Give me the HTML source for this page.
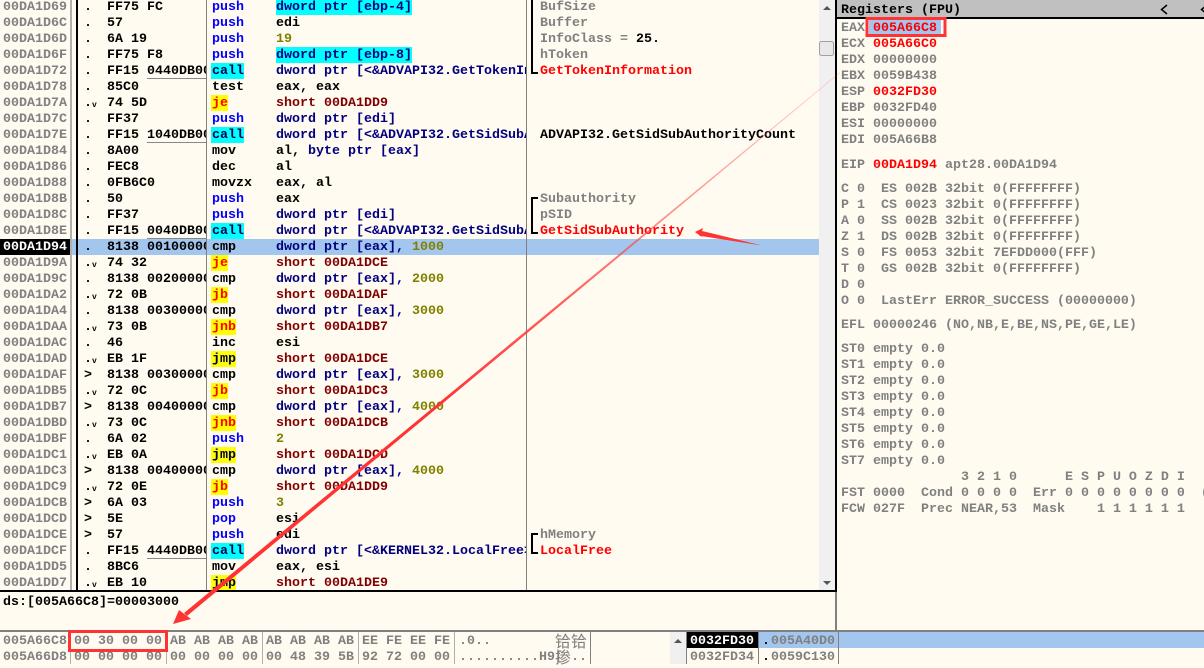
<!DOCTYPE html>
<html><head><meta charset="utf-8"><style>
html,body{margin:0;padding:0}
body{width:1204px;height:664px;overflow:hidden;position:relative;background:#fffbf0;font:bold 13.33px/19px "Liberation Mono","Noto Sans CJK SC",monospace;color:#000}
.abs,.reg,.mem,.r span{white-space:pre}
.abs{position:absolute}
#dis{position:absolute;left:0;top:-1px;width:819px;height:592px;overflow:hidden}
.r{position:relative;height:16px}
.r span,.r i{position:absolute;top:0;height:16px;line-height:17px;font-weight:bold;font-style:normal;text-decoration:none}
.r span span{position:static;height:auto}
.r span span.b{display:inline-block;height:16px;background:#0ff;vertical-align:top}
.a{left:3px;color:#808080}
.d{left:84px}
.r .v{left:92px;font-size:8px;line-height:16px;top:3px}
.h{left:107px;width:99px;overflow:hidden}
.m{left:212px}
.o{left:276px;width:250px;overflow:hidden;color:#000080}
.c{left:540px}
.p{color:#00f}
.cy{background:#0ff;left:211px;width:32px;padding-left:1px;color:#000050}
.ye{background:#ff0;left:211px;padding:0 0 0 1px;color:#f00}
.jm{background:#ff0;left:211px;padding:0 0 0 1px;color:#000040}
.k{color:#000}.n{color:#808000}.s{color:#800000}.g{color:#808080}.rd{color:#f00}
.hl{background:#a3c6ef}
.r .ul{left:147px;width:59px;height:1px;top:15px;background:#888}
.t{position:absolute;background:#000}
.reg{position:absolute;left:841px;color:#808080}
.mem{position:absolute;color:#808080}
.x{position:absolute;top:632px;height:32px;width:1px;background:#b0b0b0}
</style></head><body>
<div class="abs hl" style="left:72px;top:239px;width:747px;height:16px"></div>
<div class="abs" style="left:0;top:239px;width:70px;height:16px;background:#000"></div>
<div id="dis">
<div class="r"><span class="a">00DA1D69</span><span class="d">.</span><span class="h">FF75 FC</span><span class="m p">push</span><span class="o"><span class="b">dword ptr [ebp-4]</span></span><span class="c g">BufSize</span></div>
<div class="r"><span class="a">00DA1D6C</span><span class="d">.</span><span class="h">57</span><span class="m p">push</span><span class="o k">edi</span><span class="c g">Buffer</span></div>
<div class="r"><span class="a">00DA1D6D</span><span class="d">.</span><span class="h">6A 19</span><span class="m p">push</span><span class="o n">19</span><span class="c g">InfoClass = <span style="color:#000">25.</span></span></div>
<div class="r"><span class="a">00DA1D6F</span><span class="d">.</span><span class="h">FF75 F8</span><span class="m p">push</span><span class="o"><span class="b">dword ptr [ebp-8]</span></span><span class="c g">hToken</span></div>
<div class="r"><span class="a">00DA1D72</span><span class="d">.</span><span class="h">FF15 0440DB00</span><i class="ul"></i><span class="cy">call</span><span class="o">dword ptr [&lt;&amp;ADVAPI32.GetTokenInformation&gt;]</span><span class="c rd">GetTokenInformation</span></div>
<div class="r"><span class="a">00DA1D78</span><span class="d">.</span><span class="h">85C0</span><span class="m">test</span><span class="o k">eax, eax</span></div>
<div class="r"><span class="a">00DA1D7A</span><span class="d">.</span><span class="v">v</span><span class="h">74 5D</span><span class="ye">je</span><span class="o s">short 00DA1DD9</span></div>
<div class="r"><span class="a">00DA1D7C</span><span class="d">.</span><span class="h">FF37</span><span class="m p">push</span><span class="o">dword ptr [edi]</span></div>
<div class="r"><span class="a">00DA1D7E</span><span class="d">.</span><span class="h">FF15 1040DB00</span><i class="ul"></i><span class="cy">call</span><span class="o">dword ptr [&lt;&amp;ADVAPI32.GetSidSubAuthorityCount&gt;]</span><span class="c">ADVAPI32.GetSidSubAuthorityCount</span></div>
<div class="r"><span class="a">00DA1D84</span><span class="d">.</span><span class="h">8A00</span><span class="m">mov</span><span class="o"><span style="color:#000">al, </span>byte ptr [eax]</span></div>
<div class="r"><span class="a">00DA1D86</span><span class="d">.</span><span class="h">FEC8</span><span class="m">dec</span><span class="o k">al</span></div>
<div class="r"><span class="a">00DA1D88</span><span class="d">.</span><span class="h">0FB6C0</span><span class="m">movzx</span><span class="o k">eax, al</span></div>
<div class="r"><span class="a">00DA1D8B</span><span class="d">.</span><span class="h">50</span><span class="m p">push</span><span class="o k">eax</span><span class="c g">Subauthority</span></div>
<div class="r"><span class="a">00DA1D8C</span><span class="d">.</span><span class="h">FF37</span><span class="m p">push</span><span class="o">dword ptr [edi]</span><span class="c g">pSID</span></div>
<div class="r"><span class="a">00DA1D8E</span><span class="d">.</span><span class="h">FF15 0040DB00</span><i class="ul"></i><span class="cy">call</span><span class="o">dword ptr [&lt;&amp;ADVAPI32.GetSidSubAuthority&gt;]</span><span class="c rd">GetSidSubAuthority</span></div>
<div class="r"><span class="a" style="color:#fff">00DA1D94</span><span class="d">.</span><span class="h">8138 00100000</span><span class="m">cmp</span><span class="o">dword ptr [eax], <span class="n">1000</span></span></div>
<div class="r"><span class="a">00DA1D9A</span><span class="d">.</span><span class="v">v</span><span class="h">74 32</span><span class="ye">je</span><span class="o s">short 00DA1DCE</span></div>
<div class="r"><span class="a">00DA1D9C</span><span class="d">.</span><span class="h">8138 00200000</span><span class="m">cmp</span><span class="o">dword ptr [eax], <span class="n">2000</span></span></div>
<div class="r"><span class="a">00DA1DA2</span><span class="d">.</span><span class="v">v</span><span class="h">72 0B</span><span class="ye">jb</span><span class="o s">short 00DA1DAF</span></div>
<div class="r"><span class="a">00DA1DA4</span><span class="d">.</span><span class="h">8138 00300000</span><span class="m">cmp</span><span class="o">dword ptr [eax], <span class="n">3000</span></span></div>
<div class="r"><span class="a">00DA1DAA</span><span class="d">.</span><span class="v">v</span><span class="h">73 0B</span><span class="ye">jnb</span><span class="o s">short 00DA1DB7</span></div>
<div class="r"><span class="a">00DA1DAC</span><span class="d">.</span><span class="h">46</span><span class="m">inc</span><span class="o k">esi</span></div>
<div class="r"><span class="a">00DA1DAD</span><span class="d">.</span><span class="v">v</span><span class="h">EB 1F</span><span class="jm">jmp</span><span class="o s">short 00DA1DCE</span></div>
<div class="r"><span class="a">00DA1DAF</span><span class="d">&gt;</span><span class="h">8138 00300000</span><span class="m">cmp</span><span class="o">dword ptr [eax], <span class="n">3000</span></span></div>
<div class="r"><span class="a">00DA1DB5</span><span class="d">.</span><span class="v">v</span><span class="h">72 0C</span><span class="ye">jb</span><span class="o s">short 00DA1DC3</span></div>
<div class="r"><span class="a">00DA1DB7</span><span class="d">&gt;</span><span class="h">8138 00400000</span><span class="m">cmp</span><span class="o">dword ptr [eax], <span class="n">4000</span></span></div>
<div class="r"><span class="a">00DA1DBD</span><span class="d">.</span><span class="v">v</span><span class="h">73 0C</span><span class="ye">jnb</span><span class="o s">short 00DA1DCB</span></div>
<div class="r"><span class="a">00DA1DBF</span><span class="d">.</span><span class="h">6A 02</span><span class="m p">push</span><span class="o n">2</span></div>
<div class="r"><span class="a">00DA1DC1</span><span class="d">.</span><span class="v">v</span><span class="h">EB 0A</span><span class="jm">jmp</span><span class="o s">short 00DA1DCD</span></div>
<div class="r"><span class="a">00DA1DC3</span><span class="d">&gt;</span><span class="h">8138 00400000</span><span class="m">cmp</span><span class="o">dword ptr [eax], <span class="n">4000</span></span></div>
<div class="r"><span class="a">00DA1DC9</span><span class="d">.</span><span class="v">v</span><span class="h">72 0E</span><span class="ye">jb</span><span class="o s">short 00DA1DD9</span></div>
<div class="r"><span class="a">00DA1DCB</span><span class="d">&gt;</span><span class="h">6A 03</span><span class="m p">push</span><span class="o n">3</span></div>
<div class="r"><span class="a">00DA1DCD</span><span class="d">&gt;</span><span class="h">5E</span><span class="m p">pop</span><span class="o k">esi</span></div>
<div class="r"><span class="a">00DA1DCE</span><span class="d">&gt;</span><span class="h">57</span><span class="m p">push</span><span class="o k">edi</span><span class="c g">hMemory</span></div>
<div class="r"><span class="a">00DA1DCF</span><span class="d">.</span><span class="h">FF15 4440DB00</span><i class="ul"></i><span class="cy">call</span><span class="o">dword ptr [&lt;&amp;KERNEL32.LocalFree&gt;]</span><span class="c rd">LocalFree</span></div>
<div class="r"><span class="a">00DA1DD5</span><span class="d">.</span><span class="h">8BC6</span><span class="m">mov</span><span class="o k">eax, esi</span></div>
<div class="r"><span class="a">00DA1DD7</span><span class="d">.</span><span class="v">v</span><span class="h">EB 10</span><span class="jm">jmp</span><span class="o s">short 00DA1DE9</span></div>
</div>

<!-- column lines -->
<div class="abs" style="left:70px;top:0;width:2px;height:590px;background:#b0b0b0"></div>
<div class="t" style="left:76px;top:0;width:2px;height:590px"></div>
<div class="abs" style="left:206px;top:0;width:1px;height:590px;background:#808080"></div>
<div class="abs" style="left:526px;top:0;width:1px;height:590px;background:#808080"></div>
<!-- brackets -->
<div class="t" style="left:531px;top:0;width:2px;height:74px"></div><div class="t" style="left:531px;top:72px;width:7px;height:2px"></div>
<div class="t" style="left:531px;top:197px;width:2px;height:37px"></div><div class="t" style="left:531px;top:197px;width:7px;height:2px"></div><div class="t" style="left:531px;top:232px;width:7px;height:2px"></div>
<div class="t" style="left:531px;top:533px;width:2px;height:21px"></div><div class="t" style="left:531px;top:533px;width:7px;height:2px"></div><div class="t" style="left:531px;top:552px;width:7px;height:2px"></div>
<!-- scrollbar -->
<div class="abs" style="left:819px;top:0;width:16px;height:590px;background:#f0f0f0"></div>
<svg class="abs" style="left:819px;top:0" width="16" height="590"><path d="M4 10L8 6L12 10Z" fill="#555"/><path d="M4 581L8 585L12 581Z" fill="#555"/><rect x="0.5" y="41.5" width="14" height="14" rx="2" fill="#e8e8e8" stroke="#a0a0a0"/></svg>
<!-- panel borders -->
<div class="t" style="left:0;top:590px;width:836px;height:2px"></div>
<div class="t" style="left:835px;top:0;width:2px;height:592px"></div>
<div class="abs" style="left:835px;top:592px;width:2px;height:39px;background:#808080"></div>
<div class="abs" style="left:0;top:630px;width:1204px;height:2px;background:#808080"></div>
<div class="abs" style="left:3px;top:593px">ds:[005A66C8]=00003000</div>

<!-- registers -->
<div class="abs" style="left:837px;top:0;width:367px;height:18px;background:#c0c0c0"></div>
<div class="t" style="left:837px;top:17px;width:367px;height:2px"></div>
<div class="abs" style="left:841px;top:1px">Registers (FPU)</div>
<svg class="abs" style="left:1155px;top:0" width="49" height="18"><path d="M12 5L6.5 9.5L12 14M52 5L46.5 9.5L52 14" fill="none" stroke="#000" stroke-width="1.5"/></svg>
<div class="abs hl" style="left:869px;top:20px;width:72px;height:15px"></div>
<div class="reg" style="top:19px">EAX <span class="rd">005A66C8</span></div>
<div class="reg" style="top:35px">ECX <span class="rd">005A66C0</span></div>
<div class="reg" style="top:51px">EDX 00000000</div>
<div class="reg" style="top:67px">EBX 0059B438</div>
<div class="reg" style="top:83px">ESP <span class="rd">0032FD30</span></div>
<div class="reg" style="top:99px">EBP 0032FD40</div>
<div class="reg" style="top:115px">ESI 00000000</div>
<div class="reg" style="top:131px">EDI 005A66B8</div>
<div class="reg" style="top:156px">EIP <span class="rd">00DA1D94</span> apt28.00DA1D94</div>
<div class="reg" style="top:180px">C 0  ES 002B 32bit 0(FFFFFFFF)</div>
<div class="reg" style="top:196px">P 1  CS 0023 32bit 0(FFFFFFFF)</div>
<div class="reg" style="top:212px">A 0  SS 002B 32bit 0(FFFFFFFF)</div>
<div class="reg" style="top:228px">Z 1  DS 002B 32bit 0(FFFFFFFF)</div>
<div class="reg" style="top:244px">S 0  FS 0053 32bit 7EFDD000(FFF)</div>
<div class="reg" style="top:260px">T 0  GS 002B 32bit 0(FFFFFFFF)</div>
<div class="reg" style="top:276px">D 0</div>
<div class="reg" style="top:292px">O 0  LastErr ERROR_SUCCESS (00000000)</div>
<div class="reg" style="top:316px">EFL 00000246 (NO,NB,E,BE,NS,PE,GE,LE)</div>
<div class="reg" style="top:340px">ST0 empty 0.0</div>
<div class="reg" style="top:356px">ST1 empty 0.0</div>
<div class="reg" style="top:372px">ST2 empty 0.0</div>
<div class="reg" style="top:388px">ST3 empty 0.0</div>
<div class="reg" style="top:404px">ST4 empty 0.0</div>
<div class="reg" style="top:420px">ST5 empty 0.0</div>
<div class="reg" style="top:436px">ST6 empty 0.0</div>
<div class="reg" style="top:452px">ST7 empty 0.0</div>
<div class="reg" style="top:468px">               3 2 1 0      E S P U O Z D I</div>
<div class="reg" style="top:484px">FST 0000  Cond 0 0 0 0  Err 0 0 0 0 0 0 0 0  (</div>
<div class="reg" style="top:500px">FCW 027F  Prec NEAR,53  Mask    1 1 1 1 1 1</div>

<!-- dump -->
<div class="mem" style="left:3px;top:632px">005A66C8</div><div class="mem" style="left:3px;top:648px">005A66D8</div>
<div class="mem" style="left:74px;top:632px">00 30 00 00</div><div class="mem" style="left:74px;top:648px">00 00 00 00</div>
<div class="mem" style="left:170px;top:632px">AB AB AB AB</div><div class="mem" style="left:170px;top:648px">00 00 00 00</div>
<div class="mem" style="left:266px;top:632px">AB AB AB AB</div><div class="mem" style="left:266px;top:648px">00 48 39 5B</div>
<div class="mem" style="left:362px;top:632px">EE FE EE FE</div><div class="mem" style="left:362px;top:648px">92 72 00 00</div>
<div class="mem" style="left:459px;top:632px">.0..</div><div class="mem" style="left:459px;top:648px">..........H9[</div>
<div class="mem" style="left:555px;top:631px;font:16px/18px 'Noto Sans CJK SC',sans-serif">铪铪</div>
<div class="mem" style="left:555px;top:647px;font:16px/18px 'Noto Sans CJK SC',sans-serif">掺</div>
<div class="mem" style="left:571px;top:648px">..</div>
<div class="x" style="left:70px"></div><div class="x" style="left:166px"></div><div class="x" style="left:262px"></div><div class="x" style="left:358px"></div><div class="x" style="left:454px"></div><div class="x" style="left:590px;background:#808080"></div>
<div class="abs" style="left:670px;top:632px;width:16px;height:32px;background:#f0f0f0"></div>
<svg class="abs" style="left:670px;top:632px" width="16" height="32"><path d="M4 11L8 7L12 11Z" fill="#555"/></svg>
<div class="x" style="left:686px;width:1px;background:#808080"></div>
<!-- stack -->
<div class="abs" style="left:687px;top:632px;width:71px;height:16px;background:#000"></div>
<div class="abs hl" style="left:759px;top:632px;width:445px;height:16px"></div>
<div class="mem" style="left:690px;top:632px;color:#fff">0032FD30</div>
<div class="mem" style="left:690px;top:648px">0032FD34</div>
<div class="mem" style="left:762px;top:632px;color:#000">.</div><div class="mem" style="left:771px;top:632px">005A40D0</div>
<div class="mem" style="left:762px;top:648px;color:#000">.</div><div class="mem" style="left:771px;top:648px">0059C130</div>
<div class="x" style="left:758px;background:#808080"></div><div class="x" style="left:838px;background:#808080"></div>

<!-- annotations -->
<svg class="abs" style="left:0;top:0;pointer-events:none" width="1204" height="664">
<defs><linearGradient id="g" gradientUnits="userSpaceOnUse" x1="840" y1="72" x2="174" y2="624"><stop offset="0" stop-color="#ff4444" stop-opacity=".2"/><stop offset=".35" stop-color="#ff4444" stop-opacity=".75"/><stop offset=".6" stop-color="#f33" stop-opacity="1"/></linearGradient></defs>
<polygon points="840,72 840,73 187,616 184,613" fill="url(#g)"/>
<polygon points="173,624 179,610 191,619" fill="#f33"/>
<polygon points="695,232 703,228 702,231 762,245.5 701,236 703,238" fill="#f33"/>
<rect x="867" y="18.5" width="78" height="17" fill="none" stroke="#f33" stroke-width="3"/>
<rect x="69.5" y="631.5" width="97" height="19" fill="none" stroke="#f33" stroke-width="3"/>
</svg>
</body></html>
